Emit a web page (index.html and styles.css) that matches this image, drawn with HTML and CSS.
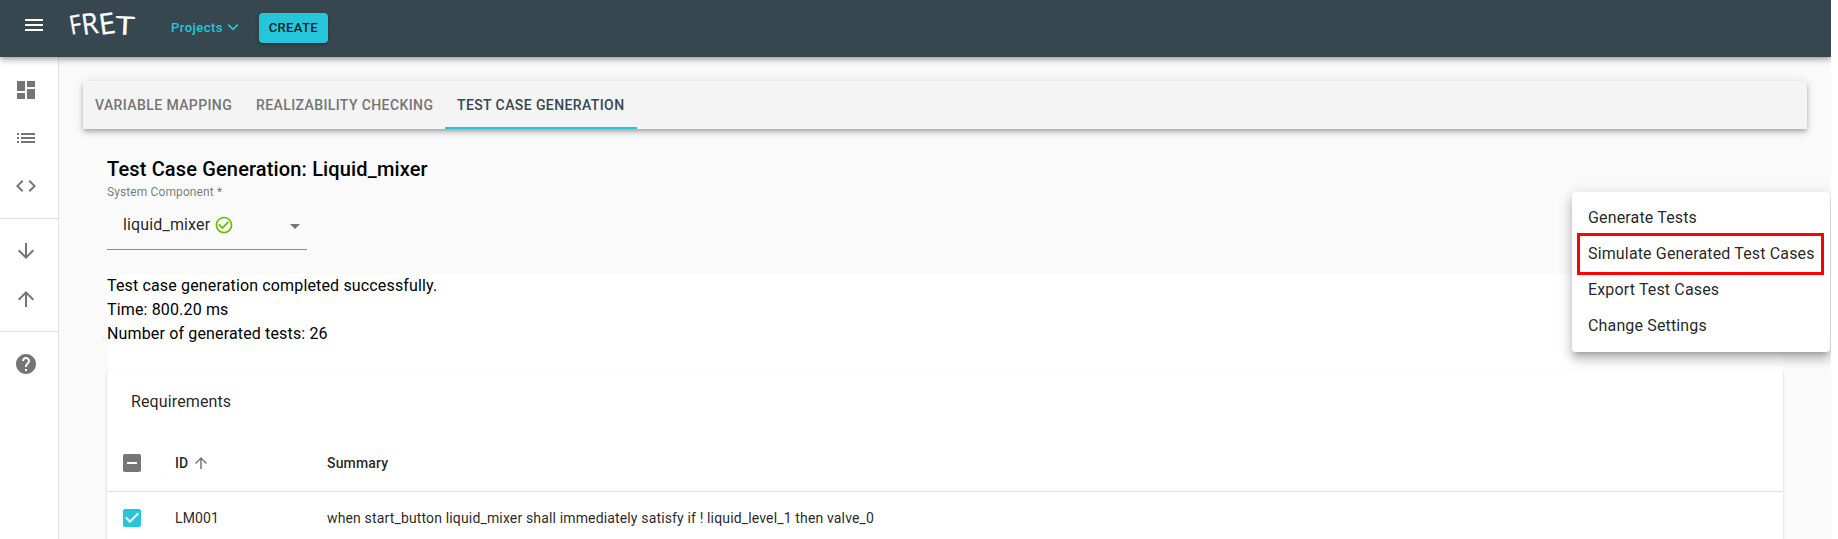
FILE: index.html
```html
<!DOCTYPE html>
<html lang="en">
<head>
<meta charset="utf-8">
<title>FRET</title>
<link rel="stylesheet" href="styles.css">
</head>
<body>
<div class="app">
  <header class="appbar">
    <svg class="icon menu-icon" viewBox="0 0 24 24"><path d="M3 18h18v-2H3v2zm0-5h18v-2H3v2zm0-7v2h18V6H3z"/></svg>
    <div class="logo" aria-label="FRET"><span class="logo-f">F</span><span class="logo-r">R</span><span class="logo-e">E</span><span class="logo-t">T</span></div>
    <div class="projects"><span>Projects</span><svg viewBox="0 0 20 20"><path d="M5.3 7.7l4.7 4.6 4.7-4.6"/></svg></div>
    <button class="create">CREATE</button>
  </header>
  <div class="body">
    <nav class="sidebar">
      <div class="group">
        <svg class="icon" viewBox="0 0 24 24"><path d="M3 13h8V3H3v10zm0 8h8v-6H3v6zm10 0h8V11h-8v10zm0-18v6h8V3h-8z"/></svg>
        <svg class="icon" viewBox="0 0 24 24"><path d="M3 13h2v-2H3v2zm0 4h2v-2H3v2zm0-8h2V7H3v2zm4 4h14v-2H7v2zm0 4h14v-2H7v2zM7 7v2h14V7H7z"/></svg>
        <svg class="icon" viewBox="0 0 24 24"><path d="M9.4 16.6L4.8 12l4.6-4.6L8 6l-6 6 6 6 1.4-1.4zm5.2 0l4.6-4.6-4.6-4.6L16 6l6 6-6 6-1.4-1.4z"/></svg>
      </div>
      <div class="group">
        <svg class="icon" viewBox="0 0 24 24"><path d="M20 12l-1.41-1.41L13 16.17V4h-2v12.17l-5.58-5.59L4 12l8 8 8-8z"/></svg>
        <svg class="icon" viewBox="0 0 24 24"><path d="M4 12l1.41 1.41L11 7.83V20h2V7.83l5.58 5.59L20 12l-8-8-8 8z"/></svg>
      </div>
      <div class="group">
        <svg class="icon" viewBox="0 0 24 24"><path d="M12 2C6.48 2 2 6.48 2 12s4.48 10 10 10 10-4.48 10-10S17.52 2 12 2zm1 17h-2v-2h2v2zm2.07-7.75l-.9.92C13.45 12.9 13 13.5 13 15h-2v-.5c0-1.1.45-2.1 1.17-2.83l1.24-1.26c.37-.36.59-.86.59-1.41 0-1.1-.9-2-2-2s-2 .9-2 2H8c0-2.21 1.79-4 4-4s4 1.79 4 4c0 .88-.36 1.68-.93 2.25z"/></svg>
      </div>
    </nav>
    <main class="content">
      <div class="tabs">
        <div class="tab tab-mapping">VARIABLE MAPPING</div>
        <div class="tab tab-check">REALIZABILITY CHECKING</div>
        <div class="tab tab-tests active">TEST CASE GENERATION</div>
      </div>
      <section class="panel">
        <h1 class="title">Test Case Generation: Liquid_mixer</h1>
        <div class="label">System Component *</div>
        <div class="select">
          <span>liquid_mixer</span>
          <svg class="valid" viewBox="0 0 24 24"><path d="M16.59 7.58L10 14.17l-3.59-3.58L5 12l5 5 8-8zM12 2C6.48 2 2 6.48 2 12s4.48 10 10 10 10-4.48 10-10S17.52 2 12 2zm0 18c-4.42 0-8-3.58-8-8s3.58-8 8-8 8 3.58 8 8-3.58 8-8 8z"/></svg>
          <svg class="icon caret" viewBox="0 0 24 24"><path d="M7 10l5 5 5-5z"/></svg>
        </div>
        <div class="results">
          <p>Test case generation completed successfully.</p>
          <p>Time: 800.20 ms</p>
          <p>Number of generated tests: 26</p>
        </div>
        <div class="card">
          <div class="card-title">Requirements</div>
          <div class="row head">
            <svg class="icon" viewBox="0 0 24 24"><path d="M19 3H5c-1.1 0-2 .9-2 2v14c0 1.1.9 2 2 2h14c1.1 0 2-.9 2-2V5c0-1.1-.9-2-2-2zm-2 10H7v-2h10v2z"/></svg>
            <div class="id">ID<svg class="sort" viewBox="0 0 24 24"><path d="M4 12l1.41 1.41L11 7.83V20h2V7.83l5.58 5.59L20 12l-8-8-8 8z"/></svg></div>
            <div class="summary">Summary</div>
          </div>
          <div class="row">
            <svg class="icon checked" viewBox="0 0 24 24"><path d="M19 3H5c-1.11 0-2 .9-2 2v14c0 1.1.89 2 2 2h14c1.11 0 2-.9 2-2V5c0-1.1-.89-2-2-2zm-9 14l-5-5 1.41-1.41L10 14.17l7.59-7.59L19 8l-9 9z"/></svg>
            <div class="id">LM001</div>
            <div class="summary">when start_button liquid_mixer shall immediately satisfy if ! liquid_level_1 then valve_0</div>
          </div>
        </div>
      </section>
    </main>
  </div>
  <div class="menu">
    <div class="item">Generate Tests</div>
    <div class="item">Simulate Generated Test Cases</div>
    <div class="item">Export Test Cases</div>
    <div class="item">Change Settings</div>
    <div class="highlight"></div>
  </div>
</div>
</body>
</html>
```
FILE: styles.css
```css
* { box-sizing: border-box; }
body { margin: 0; background: #fff; font-family: Roboto, "Liberation Sans", sans-serif; font-size: 16px; color: rgba(0,0,0,.87); overflow: hidden; }
.app { position: relative; width: 1831px; height: 539px; background: #fafafa; display: flex; flex-direction: column; overflow: hidden; }
.icon { width: 24px; height: 24px; fill: #757575; flex: none; display: block; }

.appbar { height: 57px; flex: none; display: flex; align-items: flex-start; background: #37474f; padding: 13px 0 0 22px; z-index: 2;
  box-shadow: 0 2px 4px -1px rgba(0,0,0,.2), 0 4px 5px 0 rgba(0,0,0,.14), 0 1px 10px 0 rgba(0,0,0,.12); }
.menu-icon { fill: #fff; }
.logo { display: flex; width: 68px; height: 24px; margin-left: 22px; color: #fff; font: 29px/20px "Open Sans", sans-serif; -webkit-text-stroke: .3px #fff; }
.logo span { display: block; flex: none; text-align: center; transform-origin: center; }
.logo-f { width: 13px; transform: rotate(-10deg) scale(.8,.9) translateY(1px); }
.logo-r { width: 18px; transform: rotate(-8deg) scaleX(.92); }
.logo-e { width: 16px; transform: rotate(-8deg) scaleX(1.02); }
.logo-t { width: 20px; transform: rotate(3deg) scale(1.2,.88) translateY(2px); }
.projects { display: flex; align-items: center; height: 30px; margin-left: 35px; color: #26c6da; font-weight: 500; font-size: 13px; letter-spacing: .46px; margin-top: -1px; }
.projects svg { width: 20px; height: 20px; margin-left: 0; fill: none; stroke: #26c6da; stroke-width: 1.7; }
.create { width: 69px; height: 30px; margin-left: 16px; padding: 0; border: 0; border-radius: 4px; background: #26c6da; color: rgba(0,0,0,.87); font: 500 13px/28px Roboto, sans-serif; letter-spacing: .37px; padding-bottom: 1px;
  box-shadow: 0 3px 1px -2px rgba(0,0,0,.2), 0 2px 2px 0 rgba(0,0,0,.14), 0 1px 5px 0 rgba(0,0,0,.12); }

.body { display: flex; flex: 1; min-height: 0; }
.sidebar { width: 59px; flex: none; background: #fff; border-right: 1px solid #e0e0e0; padding-top: 1px; }
.group { padding: 8px 0 8px 14px; border-bottom: 1px solid #e0e0e0; }
.group:last-child { border: 0; }
.group .icon { margin: 12px 0 24px; }
.group .icon:last-child { margin-bottom: 12px; }

.content { flex: 1; padding: 24px 24px 0; }
.tabs { display: flex; height: 48px; background: #f4f4f4; font-weight: 500; font-size: 14px; line-height: 49px; letter-spacing: .4px; color: #757575;
  box-shadow: 0 2px 4px -1px rgba(0,0,0,.2), 0 4px 5px 0 rgba(0,0,0,.14), 0 1px 10px 0 rgba(0,0,0,.12); }
.tab { padding-left: 12px; white-space: nowrap; }
.tab-mapping { width: 161px; }
.tab-check { width: 201px; }
.tab-tests { width: 192px; }
.active { color: #37474f; border-bottom: 2px solid #26c6da; }

.panel { padding: 28px 24px 0; }
.title { margin: 0; font-size: 20px; font-weight: 500; line-height: 24px; color: #000; letter-spacing: .15px; }
.label { margin-top: 3px; font-size: 12px; line-height: 16px; color: rgba(0,0,0,.54); letter-spacing: .11px; }
.select { display: flex; align-items: center; width: 200px; height: 50px; border-bottom: 1px solid #8e8e8e; padding: 0 0 0 16px; letter-spacing: .15px; }
.valid { width: 20px; height: 20px; fill: #68bc00; margin-left: 4px; }
.caret { margin: 2px 0 0 auto; }
.results { height: 96px; margin-top: 24px; background: #fff; color: #000; line-height: 24px; letter-spacing: .15px; }
.results p { margin: 0; }
.card { height: 230px; background: #fff; border-radius: 4px;
  box-shadow: 0 1px 3px rgba(0,0,0,.12), 0 1px 2px rgba(0,0,0,.08); }
.card-title { height: 64px; line-height: 64px; padding-left: 24px; letter-spacing: .12px; }
.row { display: flex; align-items: center; height: 52px; padding-left: 13px; font-size: 14px; letter-spacing: .15px; }
.head { height: 58px; border-bottom: 1px solid #e0e0e0; font-weight: 500; }
.checked { fill: #26c6da; }
.id { display: flex; align-items: center; width: 152px; margin-left: 31px; }
.sort { width: 18px; height: 18px; margin-left: 4px; fill: #757575; }

.menu { position: absolute; left: 1572px; top: 192px; width: 258px; height: 160px; padding: 8px 0; background: #fff; border-radius: 4px; z-index: 3;
  box-shadow: 0 5px 5px -3px rgba(0,0,0,.2), 0 8px 10px 1px rgba(0,0,0,.14), 0 3px 14px 2px rgba(0,0,0,.12); }
.item { height: 36px; line-height: 35px; padding-left: 16px; letter-spacing: .15px; white-space: nowrap; }
.highlight { position: absolute; left: 5px; top: 41px; width: 247px; height: 42px; border: 3px solid #f00; }
```
